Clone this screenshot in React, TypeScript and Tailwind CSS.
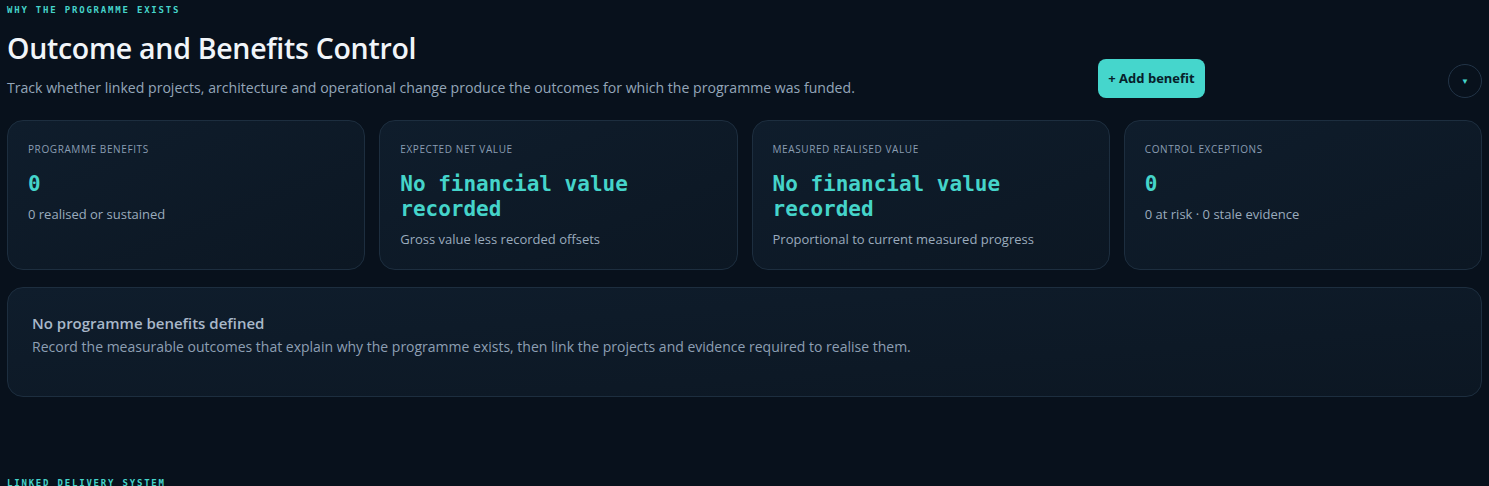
import React from "react";

const sans = { fontFamily: '"Open Sans", "Noto Sans", sans-serif' };
const mono = { fontFamily: '"DejaVu Sans Mono", "Liberation Mono", monospace' };

interface Metric {
  label: string;
  value: string;
  note: string;
}

const metrics: Metric[] = [
  { label: "Programme benefits", value: "0", note: "0 realised or sustained" },
  { label: "Expected net value", value: "No financial value recorded", note: "Gross value less recorded offsets" },
  { label: "Measured realised value", value: "No financial value recorded", note: "Proportional to current measured progress" },
  { label: "Control exceptions", value: "0", note: "0 at risk · 0 stale evidence" },
];

const MetricCard: React.FC<{ m: Metric }> = ({ m }) => (
  <div className="rounded-2xl border border-[#1d2e3f] bg-gradient-to-br from-[#0f1d2c] to-[#0c1723] px-5 pt-[21px] pb-[21px]">
    <div className="text-[10px] leading-[14px] uppercase tracking-[0.06em] text-[#8a9db2]">{m.label}</div>
    <div className="mt-[16px] text-[21px] leading-[25px] font-bold text-[#45d4ca] pr-16" style={mono}>
      {m.value}
    </div>
    <div className="mt-[8px] text-[13px] leading-[18px] text-[#9aabbd]">{m.note}</div>
  </div>
);

export default function App() {
  return (
    <div className="min-h-screen bg-[#08111c] px-[7px] pt-[4px] overflow-hidden" style={sans}>
      {/* Header */}
      <div className="flex items-start">
        <div className="flex-1">
          <div className="text-[9px] leading-[12px] font-bold tracking-[0.2em] text-[#45d4ca]" style={mono}>
            WHY THE PROGRAMME EXISTS
          </div>
          <h1 className="mt-[14px] text-[28.5px] leading-[36px] font-semibold text-[#f1f5f9] tracking-[-0.01em]">
            Outcome and Benefits Control
          </h1>
          <p className="mt-[12px] text-[14.1px] leading-[20px] text-[#94a6b9]">
            Track whether linked projects, architecture and operational change produce the outcomes for which the programme was funded.
          </p>
        </div>
        <button className="mt-[55px] h-[39px] w-[107px] rounded-lg bg-[#45d6cc] text-[13px] font-bold text-[#07202a]">
          + Add benefit
        </button>
        <button className="ml-[243px] mt-[60px] flex h-[34px] w-[34px] items-center justify-center rounded-full border border-[#223447] text-[8px] text-[#45d4ca]">
          ▼
        </button>
      </div>

      {/* Metrics */}
      <div className="mt-[22px] grid grid-cols-4 gap-[14px]">
        {metrics.map((m) => (
          <MetricCard key={m.label} m={m} />
        ))}
      </div>

      {/* Empty state */}
      <div className="mt-[17px] rounded-2xl border border-[#1d2e3f] bg-gradient-to-br from-[#0f1d2c] to-[#0c1723] px-6 pt-[25px] pb-[39px]">
        <div className="text-[15px] leading-[20px] font-semibold text-[#a9b8c9]">No programme benefits defined</div>
        <div className="mt-[4px] text-[14px] leading-[20px] text-[#8d9fb3]">
          Record the measurable outcomes that explain why the programme exists, then link the projects and evidence required to realise them.
        </div>
      </div>

      <div className="mt-[80px] text-[9px] leading-[12px] font-bold tracking-[0.2em] text-[#45d4ca]" style={mono}>
        LINKED DELIVERY SYSTEM
      </div>
    </div>
  );
}
